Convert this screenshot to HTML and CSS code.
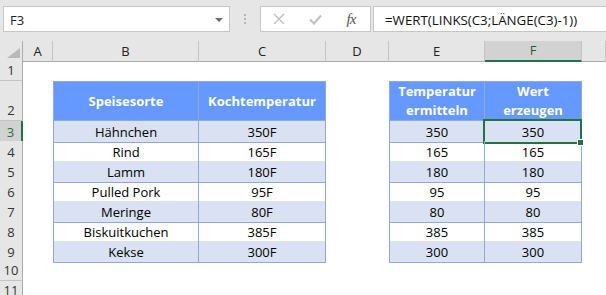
FILE: index.html
```html
<!DOCTYPE html>
<html>
<head>
    <meta charset="UTF-8">
    <link rel="stylesheet" href="styles.css">
</head>
<body>
    <div class="formula-bar">
        <div class="name-box">
            <span>F3</span>
            <span class="caret"></span>
        </div>
        <div class="grip">
            <svg width="3" height="11" viewBox="0 0 3 11"><rect x="0" y="0" width="2" height="2" fill="#b4b4b4"/><rect x="0" y="4" width="2" height="2" fill="#b4b4b4"/><rect x="0" y="8" width="2" height="2" fill="#b4b4b4"/></svg>
        </div>
        <div class="fx-buttons">
            <span class="btn">
                <svg width="12" height="12" viewBox="0 0 12 12"><path d="M1 1 L11 11 M11 1 L1 11" stroke="#c0c0c0" stroke-width="1.4" fill="none"/></svg>
            </span>
            <span class="btn">
                <svg width="13" height="11" viewBox="0 0 13 11"><path d="M1 5.5 L5 9.5 L12 1.5" stroke="#c0c0c0" stroke-width="2" fill="none"/></svg>
            </span>
            <span class="btn fx">fx</span>
        </div>
        <div class="formula">=WERT(LINKS(C3;LÄNGE(C3)-1))</div>
    </div>

    <div class="sheet">
        <!-- Spaltenköpfe -->
        <div class="row col-heads">
            <div class="corner">
                <svg width="13" height="10" viewBox="0 0 13 10"><polygon points="13,0 13,10 0,10" fill="#b9b9b9"/></svg>
            </div>
            <div class="ch">A</div>
            <div class="ch">B</div>
            <div class="ch">C</div>
            <div class="ch">D</div>
            <div class="ch">E</div>
            <div class="ch sel">F</div>
            <div class="ch"></div>
        </div>

        <div class="row">
            <div class="rh">1</div>
            <div></div><div></div><div></div><div></div><div></div><div></div><div></div>
        </div>

        <div class="row tall">
            <div class="rh">2</div>
            <div></div>
            <div class="cell hd first top">Speisesorte</div>
            <div class="cell hd top">Kochtemperatur</div>
            <div></div>
            <div class="cell hd first top">Temperatur<br>ermitteln</div>
            <div class="cell hd top">Wert<br>erzeugen</div>
            <div></div>
        </div>

        <div class="row band">
            <div class="rh sel">3</div>
            <div></div>
            <div class="cell first">Hähnchen</div>
            <div class="cell">350F</div>
            <div></div>
            <div class="cell first">350</div>
            <div class="cell active">350<span class="handle"></span></div>
            <div></div>
        </div>

        <div class="row">
            <div class="rh">4</div>
            <div></div>
            <div class="cell first">Rind</div>
            <div class="cell">165F</div>
            <div></div>
            <div class="cell first">165</div>
            <div class="cell">165</div>
            <div></div>
        </div>

        <div class="row band">
            <div class="rh">5</div>
            <div></div>
            <div class="cell first">Lamm</div>
            <div class="cell">180F</div>
            <div></div>
            <div class="cell first">180</div>
            <div class="cell">180</div>
            <div></div>
        </div>

        <div class="row">
            <div class="rh">6</div>
            <div></div>
            <div class="cell first">Pulled Pork</div>
            <div class="cell">95F</div>
            <div></div>
            <div class="cell first">95</div>
            <div class="cell">95</div>
            <div></div>
        </div>

        <div class="row band">
            <div class="rh">7</div>
            <div></div>
            <div class="cell first">Meringe</div>
            <div class="cell">80F</div>
            <div></div>
            <div class="cell first">80</div>
            <div class="cell">80</div>
            <div></div>
        </div>

        <div class="row">
            <div class="rh">8</div>
            <div></div>
            <div class="cell first">Biskuitkuchen</div>
            <div class="cell">385F</div>
            <div></div>
            <div class="cell first">385</div>
            <div class="cell">385</div>
            <div></div>
        </div>

        <div class="row band">
            <div class="rh">9</div>
            <div></div>
            <div class="cell first">Kekse</div>
            <div class="cell">300F</div>
            <div></div>
            <div class="cell first">300</div>
            <div class="cell">300</div>
            <div></div>
        </div>

        <div class="row">
            <div class="rh">10</div>
            <div></div><div></div><div></div><div></div><div></div><div></div><div></div>
        </div>

        <div class="row">
            <div class="rh">11</div>
            <div></div><div></div><div></div><div></div><div></div><div></div><div></div>
        </div>
    </div>
</body>
</html>
```

FILE: styles.css
```css
body {
    margin: 0;
    background-color: #e6e6e6;
    font-family: "Open Sans", "Liberation Sans", sans-serif;
    color: #000;
    overflow: hidden;
}

/* Bearbeitungsleiste */
.formula-bar {
    display: flex;
    align-items: flex-start;
    height: 41px;
    padding: 6px 0 0 3px;
    box-sizing: border-box;
}
.name-box {
    width: 227px;
    height: 26px;
    box-sizing: border-box;
    background-color: #fff;
    border: 1px solid #c6c6c6;
    display: flex;
    align-items: center;
    justify-content: space-between;
    padding: 1px 6px 0 6px;
    font-size: 13px;
    color: #222;
}
.caret {
    width: 0;
    height: 0;
    border-left: 4px solid transparent;
    border-right: 4px solid transparent;
    border-top: 4px solid #6b6b6b;
}
.grip {
    width: 3px;
    height: 26px;
    margin: 0 13px 0 14px;
    display: flex;
    align-items: center;
}
.grip svg { display: block; }
.fx-buttons {
    width: 111px;
    height: 26px;
    box-sizing: border-box;
    background-color: #fff;
    border: 1px solid #c6c6c6;
    display: flex;
    align-items: center;
}
.btn {
    width: 36px;
    height: 24px;
    display: flex;
    align-items: center;
    justify-content: center;
}
.btn svg { display: block; }
.fx {
    font-family: "Liberation Serif", serif;
    font-style: italic;
    font-size: 15px;
    color: #555;
    letter-spacing: -1px;
}
.formula {
    flex: 1;
    height: 26px;
    margin: 0 -2px 0 2px;
    box-sizing: border-box;
    background-color: #fff;
    border: 1px solid #c6c6c6;
    padding: 2px 0 0 11px;
    display: flex;
    align-items: center;
    font-size: 13.3px;
    color: #111;
}

/* Tabellenblatt */
.sheet {
    background-color: #fff;
    height: 254px;
}
.row {
    display: grid;
    grid-template-columns: 23px 30px 146px 127px 63px 96px 97px 1fr;
    height: 20px;
}
.row.tall {
    height: 40px;
}
.col-heads {
    background-color: #e6e6e6;
}
.corner {
    border-right: 1px solid #ababab;
    border-bottom: 1px solid #ababab;
    display: flex;
    align-items: flex-end;
    justify-content: flex-end;
    padding: 0 2px 3px 0;
    box-sizing: border-box;
}
.corner svg { display: block; }
.ch {
    border-right: 1px solid #c4c4c4;
    border-bottom: 1px solid #ababab;
    box-sizing: border-box;
    font-size: 13px;
    color: #222;
    text-align: center;
    line-height: 20px;
}
.ch.sel {
    background-color: #d2d2d2;
    border-bottom: 2px solid #217346;
    color: #1d5e3a;
    line-height: 19px;
}
.rh {
    background-color: #e6e6e6;
    border-right: 1px solid #ababab;
    border-bottom: 1px solid #c4c4c4;
    box-sizing: border-box;
    font-size: 13px;
    color: #333;
    display: flex;
    align-items: flex-end;
    justify-content: center;
    padding-bottom: 1px;
}
.rh.sel {
    background-color: #d2d2d2;
    border-right: 2px solid #217346;
    color: #217346;
}

/* Datenbereich */
.cell {
    position: relative;
    box-sizing: border-box;
    border-right: 1px solid #8eaadb;
    border-bottom: 1px solid #8eaadb;
    font-size: 13px;
    text-align: center;
    line-height: 20px;
    padding-top: 1px;
}
.cell.first { border-left: 1px solid #8eaadb; }
.cell.top { border-top: 1px solid #8eaadb; }
.band .cell { background-color: #d9e1f2; }
.cell.hd {
    background-color: #6699ff;
    color: #fff;
    font-weight: bold;
    display: flex;
    align-items: center;
    justify-content: center;
    line-height: 19px;
    padding-top: 0;
}
.cell.active::after {
    content: "";
    position: absolute;
    left: -2px;
    top: -2px;
    right: -1px;
    bottom: -2px;
    border: 2px solid #217346;
}
.handle {
    position: absolute;
    right: -3px;
    bottom: -4px;
    width: 5px;
    height: 5px;
    background-color: #217346;
    border: 1px solid #fff;
    z-index: 1;
}
```
